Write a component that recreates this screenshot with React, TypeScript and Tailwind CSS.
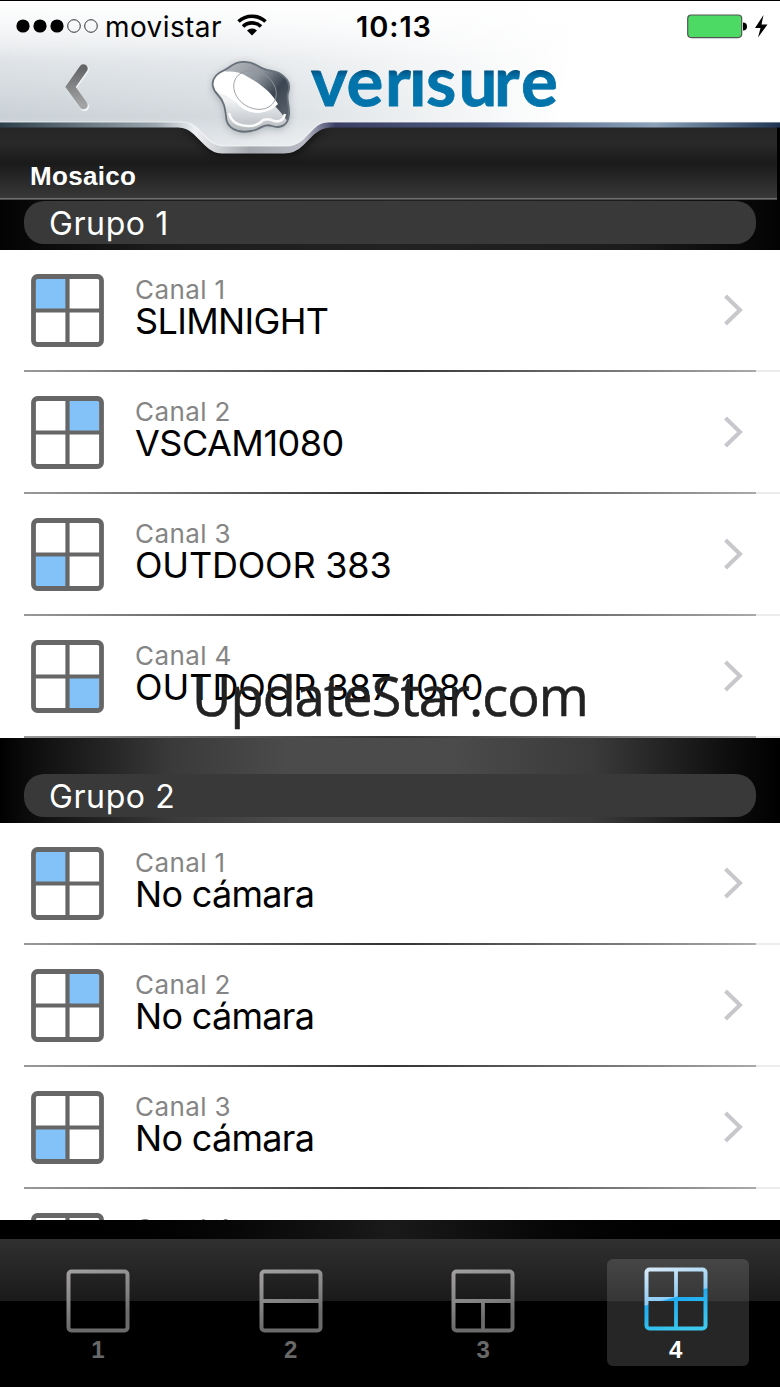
import React from 'react';
import clsx from 'clsx';

type Channel = {
    id: number;
    name: string;
};

const group1: Channel[] = [
    { id: 1, name: 'SLIMNIGHT' },
    { id: 2, name: 'VSCAM1080' },
    { id: 3, name: 'OUTDOOR 383' },
    { id: 4, name: 'OUTDOOR 387 1080' },
];

const group2: Channel[] = [
    { id: 1, name: 'No cámara' },
    { id: 2, name: 'No cámara' },
    { id: 3, name: 'No cámara' },
    { id: 4, name: 'No cámara' },
];

const nameTracking: Record<string, string> = {
    'SLIMNIGHT': 'tracking-[-0.65px]',
    'VSCAM1080': 'tracking-[-0.5px]',
    'OUTDOOR 383': 'tracking-[-0.2px]',
    'OUTDOOR 387 1080': 'tracking-[-0.05px]',
    'No cámara': 'tracking-[-0.7px]',
};

function QuadIcon({ active }: { active: number }) {
    const x = active % 2 === 1 ? 5 : 38;
    const y = active > 2 ? 38 : 5;
    return (
        <svg width="73" height="73" viewBox="0 0 73 73" className="shrink-0">
            <rect x={x} y={y} width="30" height="30" fill="#82c2f9" />
            <rect x="2.5" y="2.5" width="68" height="68" rx="4" fill="none" stroke="#666" strokeWidth="4.8" />
            <path d="M36.5 3v67M3 36.5h67" stroke="#666" strokeWidth="4.2" />
        </svg>
    );
}

function ChannelRow({ channel }: { channel: Channel }) {
    return (
        <li className="h-[122px] flex flex-col shrink-0">
            <div className="flex flex-1 items-start pl-[31px] pr-9 pt-6">
                <QuadIcon active={channel.id} />
                <div className="ml-[31px] flex-1 pt-[2px]">
                    <p className="text-[26px] leading-7 text-[#858585] tracking-[0.4px]">Canal {channel.id}</p>
                    <p className={clsx('-mt-px text-[36px] leading-9 text-black whitespace-nowrap', nameTracking[channel.name])}>{channel.name}</p>
                </div>
                <svg width="21" height="34" viewBox="0 0 21 34" className="mt-[19px]">
                    <path d="M2.5 3L17 17L2.5 31" fill="none" stroke="#c7c7cc" strokeWidth="4" />
                </svg>
            </div>
            <div className="flex h-[2px] ml-6">
                <div className="w-[732px] bg-linear-to-r from-[#999] via-[#333] to-[#aaa]" />
                <div className="flex-1 bg-[#ececec]" />
            </div>
        </li>
    );
}

function GroupTitle({ children }: { children: React.ReactNode }) {
    return (
        <h2 className="mx-6 h-[43px] rounded-[20px] bg-[#393939] pl-[25px] text-[32px] leading-[45px] tracking-[0.6px] text-white">
            {children}
        </h2>
    );
}

function Header() {
    return (
        <header className="relative h-[200px] shrink-0">
            <svg width="780" height="200" viewBox="0 0 780 200" className="absolute inset-0">
                <defs>
                    <linearGradient id="strip" x1="0" y1="0" x2="0" y2="1">
                        <stop offset="0" stopColor="#262626" />
                        <stop offset="0.25" stopColor="#292929" />
                        <stop offset="0.5" stopColor="#1a1a1a" />
                        <stop offset="1" stopColor="#3a3a3a" />
                    </linearGradient>
                    <linearGradient id="silver" x1="0" y1="0" x2="0" y2="1">
                        <stop offset="0" stopColor="#f5f7f8" />
                        <stop offset="0.3" stopColor="#e6e9ec" />
                        <stop offset="0.8" stopColor="#c8d0d5" />
                        <stop offset="1" stopColor="#dfe2e6" />
                    </linearGradient>
                    <linearGradient id="shine" x1="0" y1="0" x2="1" y2="0.04">
                        <stop offset="0" stopColor="#fff" stopOpacity="0" />
                        <stop offset="0.3" stopColor="#fff" stopOpacity="0.2" />
                        <stop offset="0.75" stopColor="#fff" stopOpacity="1" />
                    </linearGradient>
                    <linearGradient id="top" x1="0" y1="0" x2="0" y2="1">
                        <stop offset="0" stopColor="#fff" stopOpacity="0.9" />
                        <stop offset="1" stopColor="#fff" stopOpacity="0" />
                    </linearGradient>
                    <linearGradient id="edge" x1="0" y1="0" x2="1" y2="0">
                        <stop offset="0" stopColor="#2c3f4b" />
                        <stop offset="0.2" stopColor="#9aa5ad" />
                        <stop offset="0.25" stopColor="#eef0f2" />
                        <stop offset="0.32" stopColor="#a5a8ae" />
                        <stop offset="0.39" stopColor="#b9bac4" />
                        <stop offset="0.43" stopColor="#3b3f66" />
                        <stop offset="0.62" stopColor="#4a587c" />
                        <stop offset="0.84" stopColor="#8ba2b9" />
                        <stop offset="1" stopColor="#1f3452" />
                    </linearGradient>
                    <filter id="soft" x="-20%" y="-20%" width="140%" height="140%">
                        <feGaussianBlur stdDeviation="4" />
                    </filter>
                </defs>
                <rect width="780" height="200" fill="#000" />
                <rect y="126" width="777" height="74" fill="url(#strip)" />
                <rect y="198" width="777" height="1.3" fill="#707070" />
                <path d="M176 128q10 0 17 7l13 13q8 7 17 7h64q10 0 17-7l13-13q7-7 17-7z" fill="#000" opacity="0.6" filter="url(#soft)" />
                <path d="M0 122V127.500H178q9 0 16 7l11 11q8 8 17 8H284q11 0 19-8l11-11q8-7 17-7H780V122z" fill="url(#edge)" />
                <path d="M0 1V122H183q8 0 14 6l12 12q7 6 16 6H286q9 0 16-6l12-12q6-6 14-6H780V1z" fill="url(#silver)" />
                <path d="M0 1V122H183q8 0 14 6l12 12q7 6 16 6H286q9 0 16-6l12-12q6-6 14-6H780V1z" fill="url(#shine)" />
                <rect y="1" width="780" height="60" fill="url(#top)" />
                <path d="M0 122H183q8 0 14 6l12 12q7 6 16 6H286q9 0 16-6l12-12q6-6 14-6H780" fill="none" stroke="#f4f5f7" strokeWidth="1.2" opacity="0.8" />
            </svg>

            <div className="relative flex h-[50px] items-center pt-[3px]">
                <div className="flex w-[340px] items-center pl-4">
                    <svg width="83" height="15" viewBox="0 0 83 15">
                        <circle cx="7" cy="7" r="6.6" />
                        <circle cx="24" cy="7" r="6.6" />
                        <circle cx="41" cy="7" r="6.6" />
                        <circle cx="58" cy="7" r="6.3" fill="none" stroke="#333" strokeWidth="1" />
                        <circle cx="75" cy="7" r="6.3" fill="none" stroke="#333" strokeWidth="1" />
                    </svg>
                    <span className="ml-[6px] mt-px text-[28px] tracking-[0.4px] text-black">movistar</span>
                    <svg width="30" height="23" viewBox="0 0 30 23" className="ml-[15px] -mt-1">
                        <path d="M1.500 8.500a20 20 0 0 1 27 0M6 13.500a13 13 0 0 1 18 0" fill="none" stroke="#000" strokeWidth="3.600" />
                        <path d="M10 17.500a7.500 7.500 0 0 1 10 0l-5 5z" />
                    </svg>
                </div>
                <span className="w-[108px] text-center text-[29px] font-semibold tracking-[0.9px] text-black">10:13</span>
                <div className="ml-auto flex items-center pr-[11px]">
                    <svg width="82" height="26" viewBox="0 0 82 26">
                        <rect x="0.7" y="1" width="54" height="22.6" rx="3.5" fill="#4cd964" stroke="#555" strokeWidth="1.2" />
                        <path d="M56 8.500q4 0 4 4t-4 4z" />
                        <path d="M76.500 1L68 14h5.500L71 23.500L80.500 10.500H74.500z" />
                    </svg>
                </div>
            </div>

            <div className="relative flex h-[100px] items-start">
                <svg width="30" height="50" viewBox="0 0 30 50" className="ml-[62px] mt-[12px]">
                    <defs>
                        <linearGradient id="back" x1="0" y1="0" x2="0" y2="1">
                            <stop offset="0" stopColor="#646668" />
                            <stop offset="1" stopColor="#a2a4a6" />
                        </linearGradient>
                    </defs>
                    <path d="M22.500 7.500L9 26L22.500 44.500" fill="none" stroke="#f4f5f6" strokeWidth="9" strokeLinecap="round" />
                    <path d="M21.500 6.500L8.500 25L21.500 43" fill="none" stroke="url(#back)" strokeWidth="8.500" strokeLinecap="round" />
                </svg>
                <svg width="90" height="84" viewBox="0 0 90 84" className="ml-[115px] mt-[6px]">
                    <defs>
                        <linearGradient id="blob" x1="0" y1="0" x2="0" y2="1">
                            <stop offset="0" stopColor="#dfe2e6" />
                            <stop offset="0.55" stopColor="#eff1f3" />
                            <stop offset="0.8" stopColor="#c4c8cc" />
                            <stop offset="1" stopColor="#9da3a9" />
                        </linearGradient>
                        <linearGradient id="dark" x1="0" y1="0" x2="1" y2="0.8">
                            <stop offset="0" stopColor="#c0c5ca" />
                            <stop offset="0.45" stopColor="#8c939b" />
                            <stop offset="0.7" stopColor="#3c4652" />
                            <stop offset="1" stopColor="#5d6670" />
                        </linearGradient>
                        <clipPath id="blobClip">
                            <path d="M25 15C33 9 44 10 52 15C59 20 66 19 73 22C82 27 85 34 82 42C80 49 84 55 83 64C82 74 75 78 66 75C57 72 54 79 45 80C30 83 20 76 20 65C19 57 18 50 12 44C6 38 5 31 9 26C13 20 19 20 25 15z" />
                        </clipPath>
                    </defs>
                    <g transform="translate(-1 -5)">
                        <path d="M25 17C33 11 44 12 52 17C59 22 66 21 73 24C82 29 85 36 82 44C80 51 84 57 83 66C82 76 75 80 66 77C57 74 54 81 45 82C30 85 20 78 20 67C19 59 18 52 12 46C6 40 5 33 9 28C13 22 19 22 25 17z" fill="#68727a" opacity="0.5" filter="url(#soft)" />
                        <g clipPath="url(#blobClip)">
                            <rect width="90" height="90" fill="url(#blob)" />
                            <path d="M18 20Q50 28 83 72L92 25L50 0z" fill="url(#dark)" />
                            <path d="M4 28C12 19 30 18 42 26C58 35 66 43 72 53C62 64 42 66 31 52Q16 40 6 42z" fill="#fff" />
                            <path d="M23 62Q26 75 43 75Q52 75 57 69Q63 67 68 70Q77 72 79 63" fill="none" stroke="#fafafa" strokeWidth="2.5" />
                        </g>
                        <ellipse cx="49" cy="39" rx="22.500" ry="18" transform="rotate(32 49 39)" fill="none" stroke="#93979c" strokeWidth="0.8" />
                        <path d="M25 15C33 9 44 10 52 15C59 20 66 19 73 22C82 27 85 34 82 42C80 49 84 55 83 64C82 74 75 78 66 75C57 72 54 79 45 80C30 83 20 76 20 65C19 57 18 50 12 44C6 38 5 31 9 26C13 20 19 20 25 15z" fill="none" stroke="#68717a" strokeWidth="1.800" />
                    </g>
                </svg>
                <svg width="260" height="60" viewBox="0 0 260 60" className="ml-[10px] mt-[6px]" role="img" aria-label="verisure">
                    <defs>
                        <linearGradient id="word" gradientUnits="userSpaceOnUse" x1="0" y1="12" x2="0" y2="51">
                            <stop offset="0.05" stopColor="#005080" />
                            <stop offset="0.25" stopColor="#0374ab" />
                        </linearGradient>
                    </defs>
                    <text x="4 39.500 78 102 119 151.500 187 214" y="49.500" fill="url(#word)" stroke="url(#word)" strokeWidth="0.8" className="font-['Lato',sans-serif] text-[69px] font-bold">verısure</text>
                </svg>
            </div>

            <h1 className="relative -mt-px pl-[30px] pt-[12px] font-['Liberation_Sans',Arial,sans-serif] text-[26px] font-bold leading-[30px] tracking-[0.3px] text-white">Mosaico</h1>
        </header>
    );
}

const layouts = [
    'M34 34',
    'M3 32h58',
    'M3 32h58M32 32v29',
    'M3 32h58M32 3v58',
];

function TabBar() {
    return (
        <nav className="flex h-[148px] shrink-0 gap-[50.6px] bg-[linear-gradient(180deg,#303030_0px,#1a1a1a_62px,#000_62px)] pl-[27px] pt-5 font-['Liberation_Sans',Arial,sans-serif]">
            {layouts.map((d, i) => {
                const selected = i === 3;
                return (
                    <button
                        key={i}
                        className={clsx(
                            'flex h-[107px] w-[142px] flex-col items-center rounded-md text-2xl font-bold leading-7',
                            selected
                                ? 'ml-[2px] bg-linear-to-b from-[#464646] from-0% via-[#363636] via-39% to-[#262626] to-40% pr-1 pt-[8px] text-white'
                                : 'pt-[10px] text-[#696969]'
                        )}
                    >
                        <svg width="64" height="64" viewBox="0 0 64 64">
                            <defs>
                                <linearGradient id={`tab${i}`} gradientUnits="userSpaceOnUse" x1="18" y1="0" x2="36" y2="64">
                                    <stop offset="0" stopColor={selected ? '#d4e8f8' : '#a09d9f'} />
                                    <stop offset={selected ? '0.48' : '0.5'} stopColor={selected ? '#8ecdf5' : '#838383'} />
                                    <stop offset={selected ? '0.5' : '0.8'} stopColor={selected ? '#1eaaf0' : '#6b6b6b'} />
                                    <stop offset="1" stopColor={selected ? '#3cc9ed' : '#6b6b6b'} />
                                </linearGradient>
                            </defs>
                            <rect x="2.500" y="2.500" width="59" height="59" rx="3" fill="none" stroke={`url(#tab${i})`} strokeWidth="4" />
                            <path d={d} stroke={`url(#tab${i})`} strokeWidth="3.800" />
                        </svg>
                        <span className={selected ? 'mt-[5px]' : 'mt-[3px]'}>{i + 1}</span>
                    </button>
                );
            })}
        </nav>
    );
}

export default function App() {
    return (
        <div className="relative flex h-[1387px] w-[780px] flex-col overflow-hidden bg-black font-['Inter','Liberation_Sans',sans-serif] select-none">
            <Header />

            <main className="flex h-[1020px] shrink-0 flex-col overflow-hidden">
                <div className="h-[50px] shrink-0 bg-[linear-gradient(90deg,#030303,#1c1c1c_20%,#222_50%,#1c1c1c_80%,#030303)] pt-px">
                    <GroupTitle>Grupo 1</GroupTitle>
                </div>
                <ul className="flex h-[488px] shrink-0 flex-col bg-white">
                    {group1.map((c) => <ChannelRow key={c.id} channel={c} />)}
                </ul>
                <div className="h-[85px] shrink-0 bg-[linear-gradient(90deg,#000,#0a0a0a_3%,#3a3a3a_22%,#4b4b4b_37%,#4b4b4b_58%,#3a3a3a_76%,#0a0a0a_95%,#000)] pt-9">
                    <GroupTitle>Grupo 2</GroupTitle>
                </div>
                <ul className="flex shrink-0 flex-col bg-white">
                    {group2.map((c) => <ChannelRow key={c.id} channel={c} />)}
                </ul>
            </main>

            <div className="h-[19px] shrink-0 bg-linear-to-r from-black via-[#1a1a1a] to-black" />
            <TabBar />

            {/* site stamp over the list */}
            <div className="pointer-events-none absolute left-0 top-[658px] w-full text-center font-['Open_Sans','Noto_Sans',sans-serif] text-[54px] leading-[74px] tracking-[-0.9px] text-[#222] [-webkit-text-stroke:0.6px_#222]">
                UpdateStar.com
            </div>
        </div>
    );
}
